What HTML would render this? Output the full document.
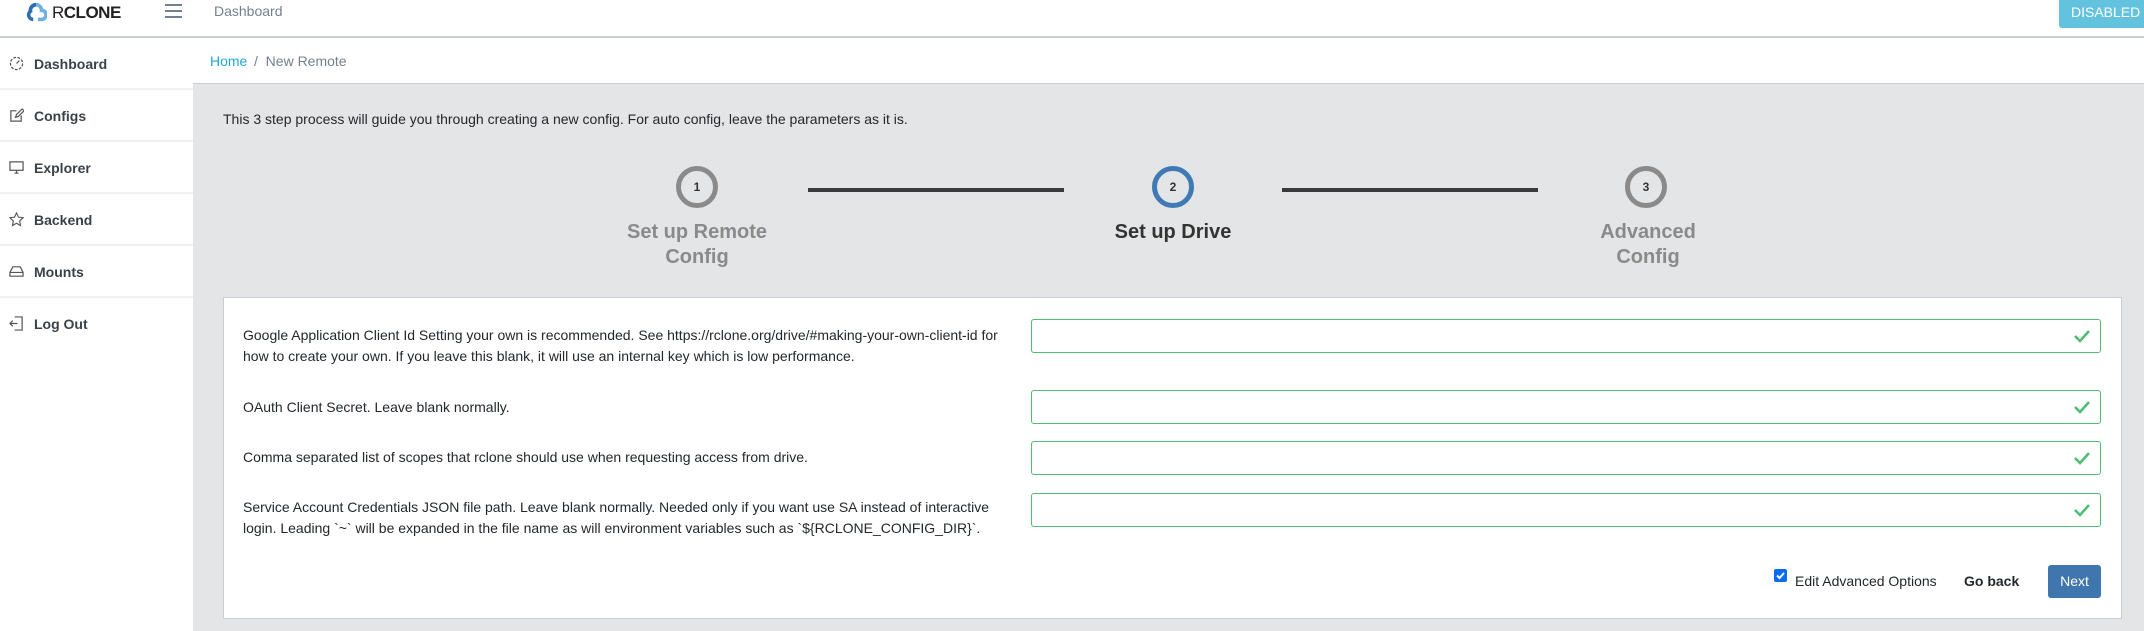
<!DOCTYPE html>
<html><head><meta charset="utf-8"><style>
*{box-sizing:border-box;margin:0;padding:0}
body{width:2144px;height:631px;overflow:hidden;font-family:"Liberation Sans",Arial,sans-serif;background:#e4e5e6;position:relative;color:#23282c}
.abs{position:absolute}
#hdr{left:0;top:0;width:2144px;height:38px;background:#fff;border-bottom:2px solid #c8ced3}
#side{left:0;top:38px;width:193px;height:593px;background:#fff}
.item{position:absolute;left:0;width:193px;height:52px;border-bottom:2px solid #eef0f2;font-weight:bold;font-size:14px;color:#3a4248}
.item span{position:absolute;left:34px;top:18px}
.item svg{position:absolute;left:9px;top:18px}
#bc{left:193px;top:38px;width:1951px;height:46px;background:#fff;border-bottom:1px solid #c8ced3;font-size:14px}
.lbl{position:absolute;left:243px;font-size:14px;line-height:20.5px;width:780px;color:#23282c}
.inp{position:absolute;left:1031px;width:1070px;height:34px;border:1px solid #4dbd74;border-radius:3px;background:#fff}
.inp svg{position:absolute;right:10px;top:9px}
.circ{position:absolute;width:42px;height:42px;border-radius:50%;border:5px solid #8a8a8a;font-size:12px;font-weight:bold;text-align:center;line-height:32px;color:#333}
.st{position:absolute;font-weight:bold;font-size:20px;text-align:center;line-height:25px;color:#8a8a8a;width:240px}
.ln{position:absolute;top:188px;height:4px;background:#3a3a3a}
</style></head><body>
<div id="hdr" class="abs">
 <svg class="abs" style="left:25px;top:2px" width="22" height="22" viewBox="0 0 24 22"><path d="M12 2a6 6 0 0 1 6 6 5 5 0 0 1 0 10h-4" fill="none" stroke="#6fb2e0" stroke-width="4"/><path d="M9 18a5 5 0 0 1-3-9 6 6 0 0 1 6-7" fill="none" stroke="#2e6fae" stroke-width="4"/></svg>
 <div class="abs" style="left:52px;top:3px;font-size:17px;letter-spacing:-0.5px;color:#222"><span style="font-weight:normal">R</span><b>CLONE</b></div>
 <div class="abs" style="left:165px;top:4px;width:17px;height:2px;background:#73818f;box-shadow:0 6px 0 #73818f,0 12px 0 #73818f"></div>
 <div class="abs" style="left:214px;top:3px;font-size:14px;color:#73818f">Dashboard</div>
 <div class="abs" style="left:2059px;top:0;width:90px;height:28px;background:#63c2de;color:#fff;font-size:14px;line-height:24px;padding-left:12px;border-radius:0 0 3px 3px">DISABLED</div>
</div>
<div id="side" class="abs">
 <div class="item" style="top:0"><svg width="15" height="15" viewBox="0 0 16 16" fill="none" stroke="#555" stroke-width="1.3"><circle cx="8" cy="8" r="6.5" stroke-dasharray="3 1.5"/><path d="M8 8l3-3"/></svg><span>Dashboard</span></div>
 <div class="item" style="top:52px"><svg width="15" height="15" viewBox="0 0 16 16" fill="none" stroke="#555" stroke-width="1.3"><path d="M13 8v6H2V3h6"/><path d="M7 10l1-3 6-6 2 2-6 6z"/></svg><span>Configs</span></div>
 <div class="item" style="top:104px"><svg width="15" height="15" viewBox="0 0 16 16" fill="none" stroke="#555" stroke-width="1.3"><rect x="1" y="2" width="14" height="9"/><path d="M6 14h4M8 11v3"/></svg><span>Explorer</span></div>
 <div class="item" style="top:156px"><svg width="15" height="15" viewBox="0 0 16 16" fill="none" stroke="#555" stroke-width="1.2"><path d="M8 1l2.1 4.5 4.9.6-3.6 3.4.9 4.9L8 12l-4.3 2.4.9-4.9L1 6.1l4.9-.6z"/></svg><span>Backend</span></div>
 <div class="item" style="top:208px"><svg width="15" height="15" viewBox="0 0 16 16" fill="none" stroke="#555" stroke-width="1.3"><path d="M1 9l3-6h8l3 6v4H1z M1 9h14"/></svg><span>Mounts</span></div>
 <div class="item" style="top:260px;border:0"><svg width="15" height="15" viewBox="0 0 16 16" fill="none" stroke="#555" stroke-width="1.3"><path d="M6 1h8v14H6M1 8h8M4 5L1 8l3 3"/></svg><span>Log Out</span></div>
</div>
<div id="bc" class="abs"><span class="abs" style="left:17px;top:15px;color:#20a8d8">Home</span><span class="abs" style="left:61px;top:15px;color:#73818f">/&nbsp; New Remote</span></div>
<div class="abs" style="left:223px;top:111px;font-size:14px">This 3 step process will guide you through creating a new config. For auto config, leave the parameters as it is.</div>
<div class="ln" style="left:808px;width:256px"></div>
<div class="ln" style="left:1282px;width:256px"></div>
<div class="circ" style="left:676px;top:166px">1</div>
<div class="circ" style="left:1152px;top:166px;border-color:#3f7ab4">2</div>
<div class="circ" style="left:1625px;top:166px">3</div>
<div class="st" style="left:577px;top:220px">Set up Remote<br>Config</div>
<div class="st" style="left:1053px;top:220px;color:#333">Set up Drive</div>
<div class="st" style="left:1528px;top:220px">Advanced<br>Config</div>
<div class="abs" style="left:223px;top:297px;width:1899px;height:322px;background:#fff;border:1px solid #c8ced3"></div>
<div class="lbl" style="top:325px">Google Application Client Id Setting your own is recommended. See https://rclone.org/drive/#making-your-own-client-id for how to create your own. If you leave this blank, it will use an internal key which is low performance.</div>
<div class="lbl" style="top:397px">OAuth Client Secret. Leave blank normally.</div>
<div class="lbl" style="top:447px">Comma separated list of scopes that rclone should use when requesting access from drive.</div>
<div class="lbl" style="top:497px">Service Account Credentials JSON file path. Leave blank normally. Needed only if you want use SA instead of interactive login. Leading `~` will be expanded in the file name as will environment variables such as `${RCLONE_CONFIG_DIR}`.</div>
<div class="inp" style="top:319px"><svg width="16" height="14" viewBox="0 0 16 14"><path d="M1 7l5 5L15 2" fill="none" stroke="#4dbd74" stroke-width="2.5"/></svg></div>
<div class="inp" style="top:390px"><svg width="16" height="14" viewBox="0 0 16 14"><path d="M1 7l5 5L15 2" fill="none" stroke="#4dbd74" stroke-width="2.5"/></svg></div>
<div class="inp" style="top:441px"><svg width="16" height="14" viewBox="0 0 16 14"><path d="M1 7l5 5L15 2" fill="none" stroke="#4dbd74" stroke-width="2.5"/></svg></div>
<div class="inp" style="top:493px"><svg width="16" height="14" viewBox="0 0 16 14"><path d="M1 7l5 5L15 2" fill="none" stroke="#4dbd74" stroke-width="2.5"/></svg></div>
<div class="abs" style="left:1774px;top:569px;width:13px;height:13px;background:#0a6cf0;border-radius:2px"><svg width="13" height="13" viewBox="0 0 13 13"><path d="M3 6.5l2.5 2.5L10 4" fill="none" stroke="#fff" stroke-width="2"/></svg></div>
<div class="abs" style="left:1795px;top:573px;font-size:14px">Edit Advanced Options</div>
<div class="abs" style="left:1964px;top:573px;font-size:14px;font-weight:bold">Go back</div>
<div class="abs" style="left:2048px;top:565px;width:53px;height:33px;background:#3f76ad;color:#fff;font-size:14px;text-align:center;line-height:33px;border-radius:3px">Next</div>
</body></html>
